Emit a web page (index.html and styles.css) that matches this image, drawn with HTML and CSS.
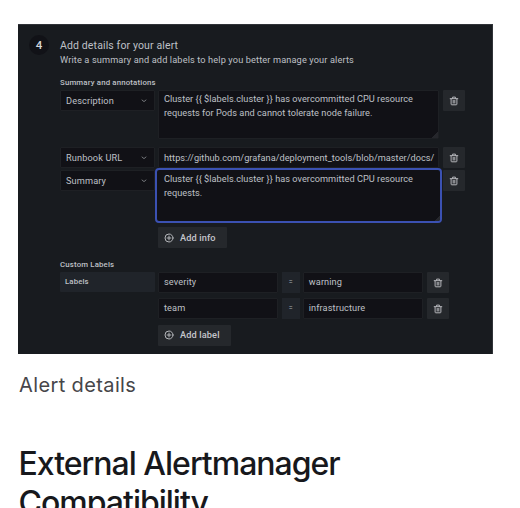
FILE: index.html
```
<!DOCTYPE html>
<html lang="en">
<head>
<meta charset="utf-8">
<title>Alert details</title>
<link rel="stylesheet" href="styles.css">
</head>
<body>
<svg class="defs" aria-hidden="true">
  <symbol id="trash" viewBox="0 0 10 10"><path d="M1.2 2.7h7.6M3.6 2.5V1.1h2.8v1.4M2.1 2.8v5.3q0 .7.7.7h4.4q.7 0 .7-.7V2.8M4.2 4.4v2.7M5.8 4.4v2.7"/></symbol>
  <symbol id="plus" viewBox="0 0 10 10"><circle cx="5" cy="5" r="4"/><path d="M5 3.1v3.8M3.1 5h3.8"/></symbol>
  <symbol id="chevron" viewBox="0 0 6 4"><path d="M1 1l2 1.6L5 1"/></symbol>
</svg>
<main>
  <figure>
    <section class="panel">
      <div class="step">4</div>
      <div class="content">
        <h3>Add details for your alert</h3>
        <p class="sub">Write a summary and add labels to help you better manage your alerts</p>
        <h4>Summary and annotations</h4>
        <div class="row annotation">
          <div class="field select"><span>Description</span><svg><use href="#chevron"/></svg></div>
          <div class="field area">Cluster {{ $labels.cluster }} has overcommitted CPU resource<br>requests for Pods and cannot tolerate node failure.</div>
          <div class="trash"><svg><use href="#trash"/></svg></div>
        </div>
        <div class="row runbook">
          <div class="field select"><span>Runbook URL</span><svg><use href="#chevron"/></svg></div>
          <div class="field url">https://github.com/grafana/deployment_tools/blob/master/docs/</div>
          <div class="trash"><svg><use href="#trash"/></svg></div>
        </div>
        <div class="row summary">
          <div class="field select"><span>Summary</span><svg><use href="#chevron"/></svg></div>
          <div class="field area focused">Cluster {{ $labels.cluster }} has overcommitted CPU resource<br>requests.</div>
          <div class="trash"><svg><use href="#trash"/></svg></div>
        </div>
        <div class="button info"><svg><use href="#plus"/></svg><span>Add info</span></div>
        <h4 class="custom">Custom Labels</h4>
        <div class="row label-row">
          <div class="tag">Labels</div>
          <div class="field">severity</div>
          <div class="equals">=</div>
          <div class="field">warning</div>
          <div class="trash"><svg><use href="#trash"/></svg></div>
        </div>
        <div class="row label-row">
          <div></div>
          <div class="field">team</div>
          <div class="equals">=</div>
          <div class="field">infrastructure</div>
          <div class="trash"><svg><use href="#trash"/></svg></div>
        </div>
        <div class="button label"><svg><use href="#plus"/></svg><span>Add label</span></div>
      </div>
    </section>
    <figcaption>Alert details</figcaption>
  </figure>
  <h2>External Alertmanager<br>Compatibility</h2>
</main>
</body>
</html>
```
FILE: styles.css
```
* { box-sizing: border-box; }
html, body { height: 100%; }
body { margin: 0; overflow: hidden; background: #fff; font-family: Inter, "Liberation Sans", sans-serif; }
main { padding: 24px 0 0 18px; }
figure { margin: 0; }
h2, h3, h4, p { margin: 0; }
svg { display: block; flex: none; fill: none; stroke: #b4b6ba; stroke-width: 1; stroke-linecap: round; stroke-linejoin: round; }
.defs { position: absolute; width: 0; height: 0; }

.panel {
  display: flex;
  width: 475px;
  height: 330px;
  padding: 11px 0 0 11px;
  background: #181b1f;
  border-top: 1px solid #303338;
  border-right: 1px solid #303338;
  color: #bfc0c6;
  font: 9.2px/14px Roboto, sans-serif;
  letter-spacing: .13px;
  white-space: nowrap;
}
.step {
  width: 20px;
  height: 20px;
  margin: -1px 11px 0 0;
  border-radius: 50%;
  background: #111217;
  color: #d5d6db;
  font-size: 11.5px;
  font-weight: 500;
  line-height: 20px;
  text-align: center;
}
.content { width: 410px; }
h3 { height: 16px; font-size: 10.5px; line-height: 19px; font-weight: 400; letter-spacing: .13px; }
.sub { height: 15px; line-height: 15px; }
h4 { height: 23px; padding-top: 9px; font-size: 7.8px; line-height: 13px; font-weight: 500; letter-spacing: .17px; }

.row { display: grid; grid-template-columns: 95px 281px 22px; column-gap: 3px; align-items: start; }
.row > .trash { margin-left: 1px; margin-right: -1px; }
.field { height: 21px; padding: 0 5px; border: 1px solid #1e2024; border-radius: 1px; background: #111116; line-height: 18px; overflow: hidden; }
.select { display: flex; align-items: center; justify-content: space-between; }
.select svg { width: 6px; height: 4px; margin-right: 2px; stroke: #74767b; }
.area { position: relative; height: 49px; padding-top: 1px; line-height: 14px; letter-spacing: .03px; }
.url { line-height: 19px; letter-spacing: .02px; }
.area::after { content: ""; position: absolute; right: 0; bottom: 0; width: 6px; height: 6px; background: linear-gradient(135deg, transparent 50%, #26272c 50%); }
.annotation { height: 57px; }
.runbook { height: 23px; }
.summary { height: 57px; }
.focused { width: 287px; height: 55px; margin: -2px 0 0 -3px; padding: 2px 7px; border: 2px solid #3b51b2; border-radius: 4px; }
.trash { display: grid; place-items: center; height: 21px; border-radius: 1px; background: #25282c; }
.trash svg { width: 10px; height: 10px; }

.button { display: flex; align-items: center; gap: 6px; height: 21px; margin-left: 98px; padding-left: 6px; border-radius: 1px; background: #25282c; color: #c5c6cc; font-weight: 500; }
.button svg { width: 10px; height: 10px; }
.info { width: 69px; }
.label { width: 73px; }
.custom { height: 24px; padding-top: 10px; }
.label-row { grid-template-columns: 95px 120px 18px 120px 22px; column-gap: 3.4px; height: 26.3px; }
.label-row .field { margin-left: -.4px; letter-spacing: .1px; }
.label-row > .trash { margin: 0; }
.tag { height: 20px; padding-left: 5px; border-radius: 1px; background: #20242a; font-size: 7.8px; font-weight: 500; line-height: 20px; }
.equals { height: 21px; background: #20242a; color: #b0b2b8; font-size: 7px; font-weight: 500; line-height: 21px; text-align: center; }

figcaption { height: 91px; padding: 16px 0 0 1px; color: #464649; font-size: 20px; line-height: 30px; letter-spacing: .38px; }
h2 { padding-left: .5px; color: #17181c; font-size: 32px; line-height: 38.5px; font-weight: 500; letter-spacing: -1px; white-space: nowrap; }
```
